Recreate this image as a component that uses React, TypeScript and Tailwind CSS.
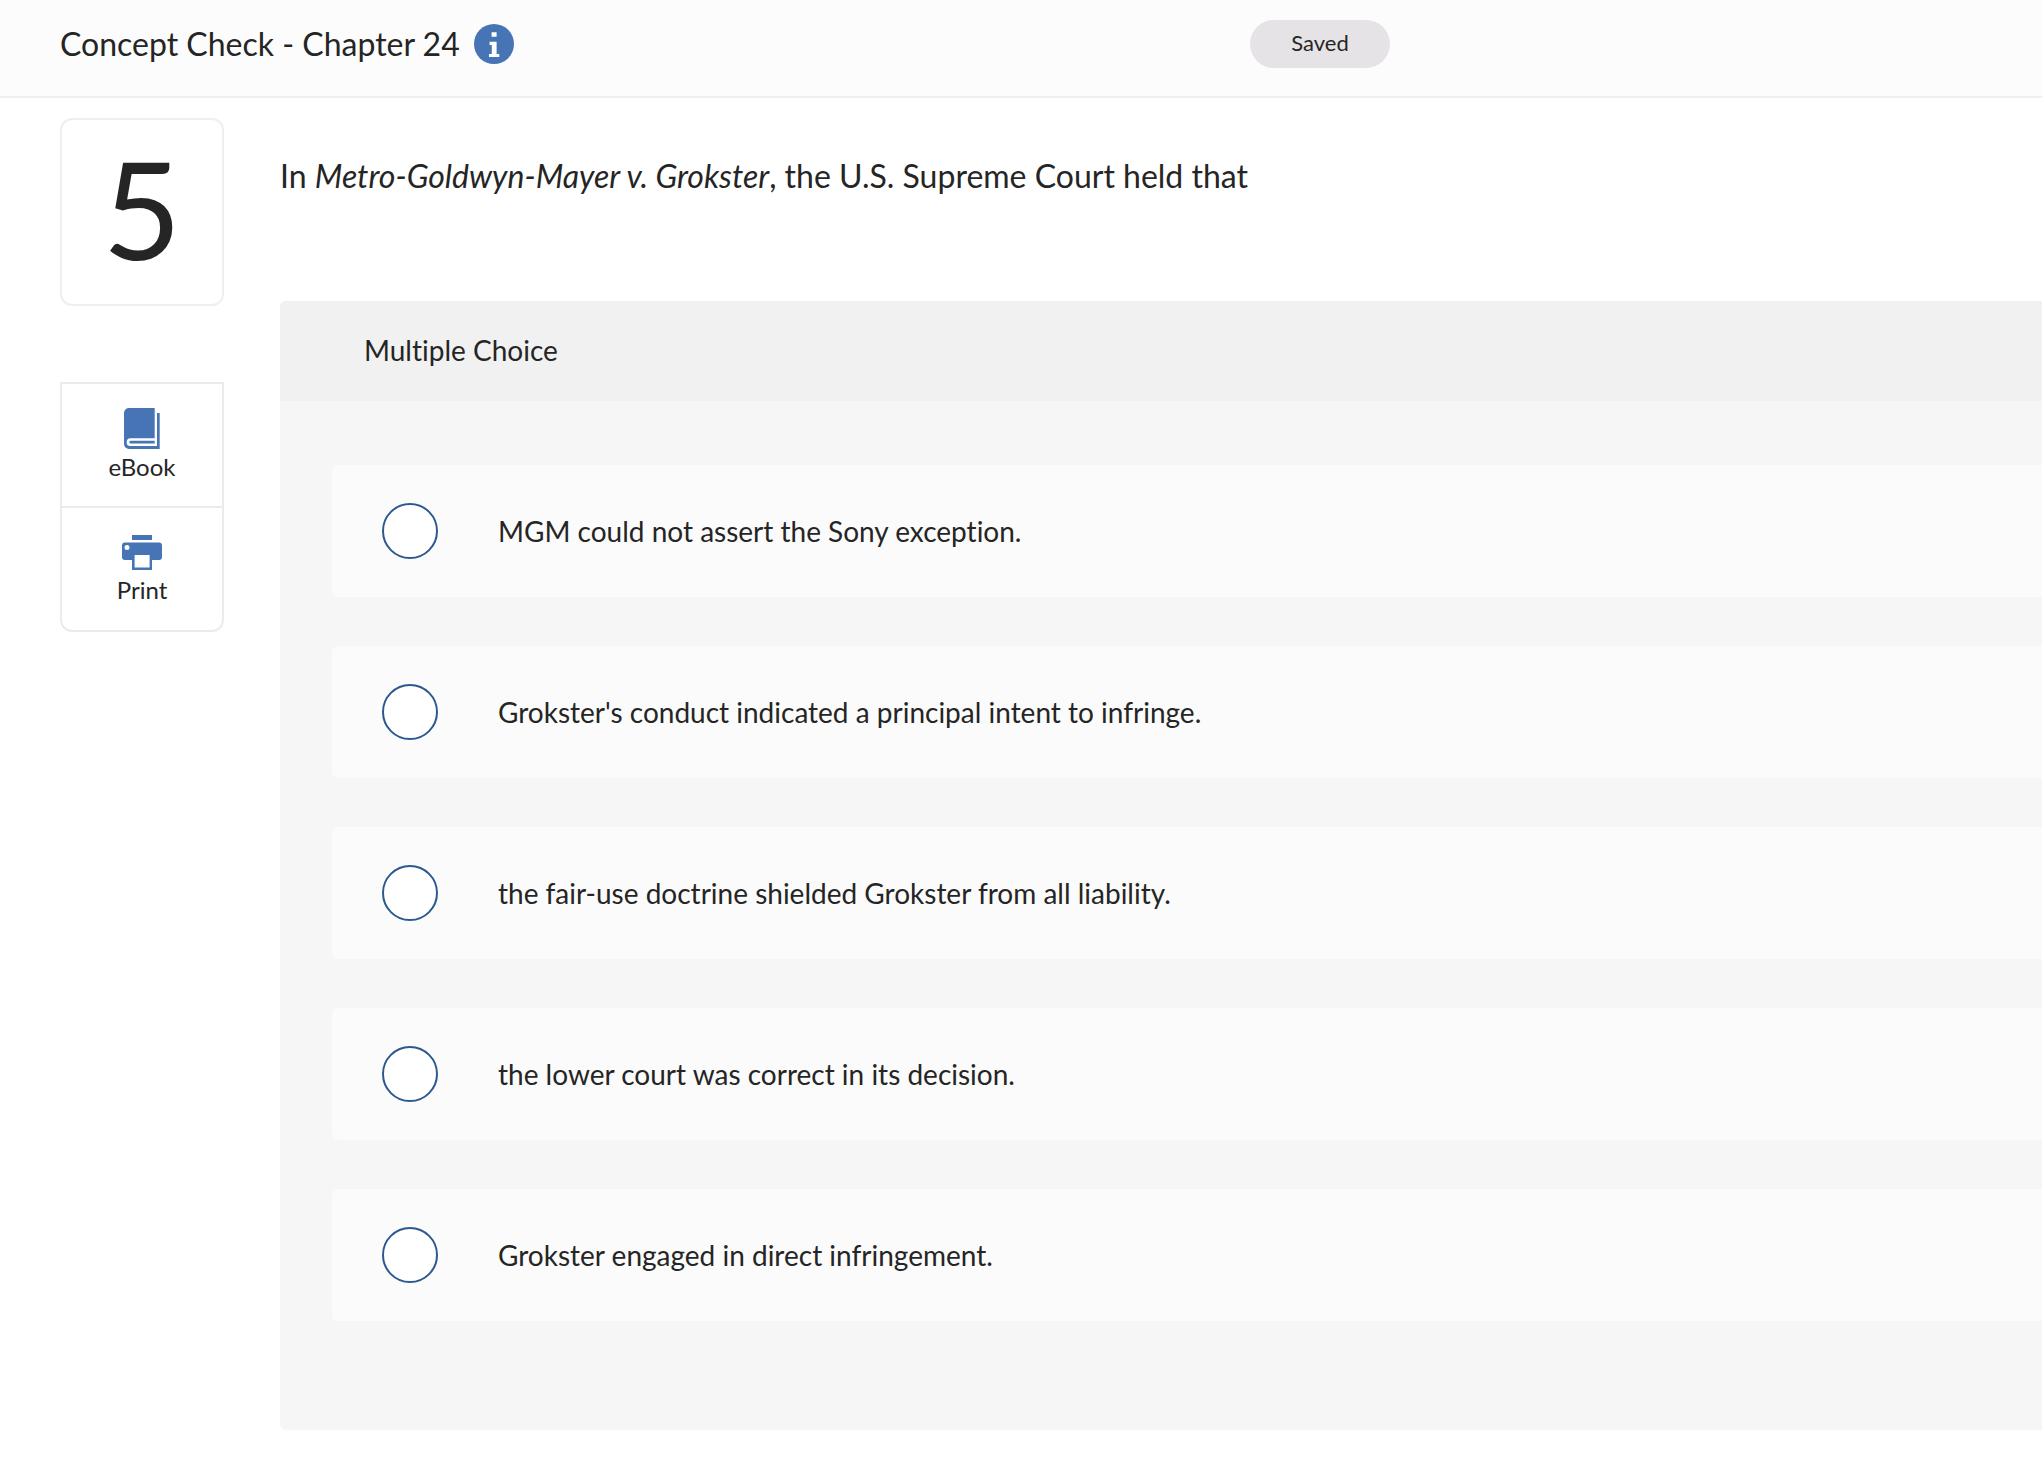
import { useState } from "react";

const choices = [
 "MGM could not assert the Sony exception.",
 "Grokster's conduct indicated a principal intent to infringe.",
 "the fair-use doctrine shielded Grokster from all liability.",
 "the lower court was correct in its decision.",
 "Grokster engaged in direct infringement.",
];

const InfoIcon = () => (
 <svg width="40" height="40" viewBox="0 0 40 40" aria-hidden="true">
  <circle cx="20" cy="20" r="20" fill="#4774b5" />
  <path d="M17.6 8.2h5v4.6h-5zM15.6 17.8h7V30h2.7v3H15v-3h2.8v-9h-2.2z" fill="#fff" />
 </svg>
);

const BookIcon = () => (
 <svg width="36" height="41" viewBox="0 0 36 41" aria-hidden="true" fill="#4774b5">
  <path d="M5 0h25.7v30.3H6.5a3.85 3.85 0 0 0 0 7.7H33V5h2.7v36H5a5 5 0 0 1-5-5V5a5 5 0 0 1 5-5z" />
  <path d="M6.6 32.8h24.1v2.6H6.6a1.3 1.3 0 0 1 0-2.6z" />
 </svg>
);

const PrintIcon = () => (
 <svg width="40" height="35" viewBox="0 0 40 35" aria-hidden="true" fill="#4774b5">
  <path d="M10 0h20v5H10z" />
  <path
   fillRule="evenodd"
   d="M3 7.5h34a3 3 0 0 1 3 3V22a3 3 0 0 1-3 3h-7v10H10V25H3a3 3 0 0 1-3-3V10.5a3 3 0 0 1 3-3zM12.6 20v12.4h15V20zM5 9.9a2.5 2.5 0 1 0 0 5 2.5 2.5 0 0 0 0-5z"
  />
 </svg>
);

const App = () => {
 const [selected, setSelected] = useState<number | null>(null);

 return (
  <div className="min-h-screen w-full overflow-x-hidden bg-white font-['Lato',sans-serif] text-[#252525] [font-variant-ligatures:none]">
   <header className="flex items-start bg-[#fcfcfc] border-b-2 border-[#efefef] pl-15 pt-5 pb-7">
    <div className="w-[1190px] flex items-center gap-3.5 h-12">
     <h1 className="text-[32px] leading-10">Concept Check - Chapter 24</h1>
     <button type="button" aria-label="Assignment information" className="cursor-pointer">
      <InfoIcon />
     </button>
    </div>
    <div role="status" className="w-35 h-12 pb-1 flex items-center justify-center rounded-full bg-[#e5e3e6] text-[22px]">
     Saved
    </div>
   </header>

   <div className="flex items-start gap-14 pl-15 pt-5 pb-8">
    <aside className="w-41 shrink-0 flex flex-col gap-19">
     <div className="h-47 pb-2 flex items-center justify-center border-2 border-[#efefef] rounded-xl text-[136px] leading-none">
      5
     </div>
     <nav className="flex flex-col border-2 border-[#ebebeb] rounded-b-xl">
      <button type="button" className="h-31 pb-0.5 border-b-2 border-[#ebebeb] flex flex-col items-center justify-center gap-1 text-2xl leading-7 cursor-pointer">
       <BookIcon />
       eBook
      </button>
      <button type="button" className="h-[122px] flex flex-col items-center justify-center gap-1.5 text-2xl leading-7 cursor-pointer">
       <PrintIcon />
       Print
      </button>
     </nav>
    </aside>

    <main className="flex-1 min-w-0">
     <p className="pt-[38px] text-[32px] leading-10">
      In <em>Metro-Goldwyn-Mayer v. Grokster</em>, the U.S. Supreme Court held that
     </p>

     <form className="mt-[105px] rounded-l-md bg-[#f6f6f6] overflow-hidden">
      <h2 className="h-25 pb-0.5 pl-21 flex items-center bg-[#f1f1f1] text-[28px]">Multiple Choice</h2>
      <div role="radiogroup" aria-label="Multiple Choice" className="flex flex-col gap-[49px] pl-13 pt-16 pb-[109px]">
       {choices.map((choice, idx) => (
        <label
         key={idx}
         className="h-33 pl-[50px] flex items-center gap-15 bg-[#fbfbfb] rounded-l-md text-[28px] cursor-pointer">
         <input
          type="radio"
          name="answer"
          checked={selected === idx}
          onChange={() => setSelected(idx)}
          className="appearance-none size-14 shrink-0 rounded-full border-2 border-[#2c598f] bg-white checked:bg-[#2c598f] cursor-pointer"
         />
         <span>{choice}</span>
        </label>
       ))}
      </div>
     </form>
    </main>
   </div>
  </div>
 );
};

export default App;
